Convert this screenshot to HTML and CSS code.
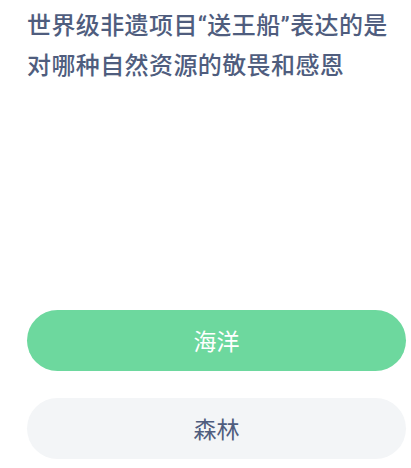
FILE: index.html
```html
<!DOCTYPE html>
<html lang="zh-CN">
<head>
    <meta charset="UTF-8">
    <title>答题</title>
    <link rel="stylesheet" href="styles.css">
</head>
<body>
    <div id="main">
        <h2 class="question">世界级非遗项目“送王船”表达的是对哪种自然资源的敬畏和感恩</h2>
        <div class="options">
            <a href="javascript:;" class="opt active">海洋</a>
            <a href="javascript:;" class="opt">森林</a>
        </div>
    </div>
</body>
</html>
```

FILE: styles.css
```css
* {
    margin: 0;
    padding: 0;
}
a {
    text-decoration: none;
}
body {
    background-color: #fff;
    font-family: "Noto Sans CJK SC", "Noto Sans", sans-serif;
}
#main {
    width: 411px;
    height: 468px;
    padding: 6px 5px 0 27px;
    box-sizing: border-box;
}
.question {
    max-width: 372px;
    font-family: Roboto, "Noto Sans CJK SC", sans-serif;
    font-size: 24px;
    font-weight: 500;
    line-height: 40px;
    letter-spacing: 0.4px;
    color: #4f5d7e;
    height: 290px;
}
.options {
    display: flex;
    flex-direction: column;
    gap: 27px;
    padding-top: 14px;
}
.opt {
    display: block;
    height: 61px;
    line-height: 61px;
    border-radius: 31px;
    text-align: center;
    font-size: 23px;
    color: #4f5d7e;
    background-color: #f3f5f7;
}
.opt.active {
    color: #fff;
    background-color: #6dd89e;
}
```
